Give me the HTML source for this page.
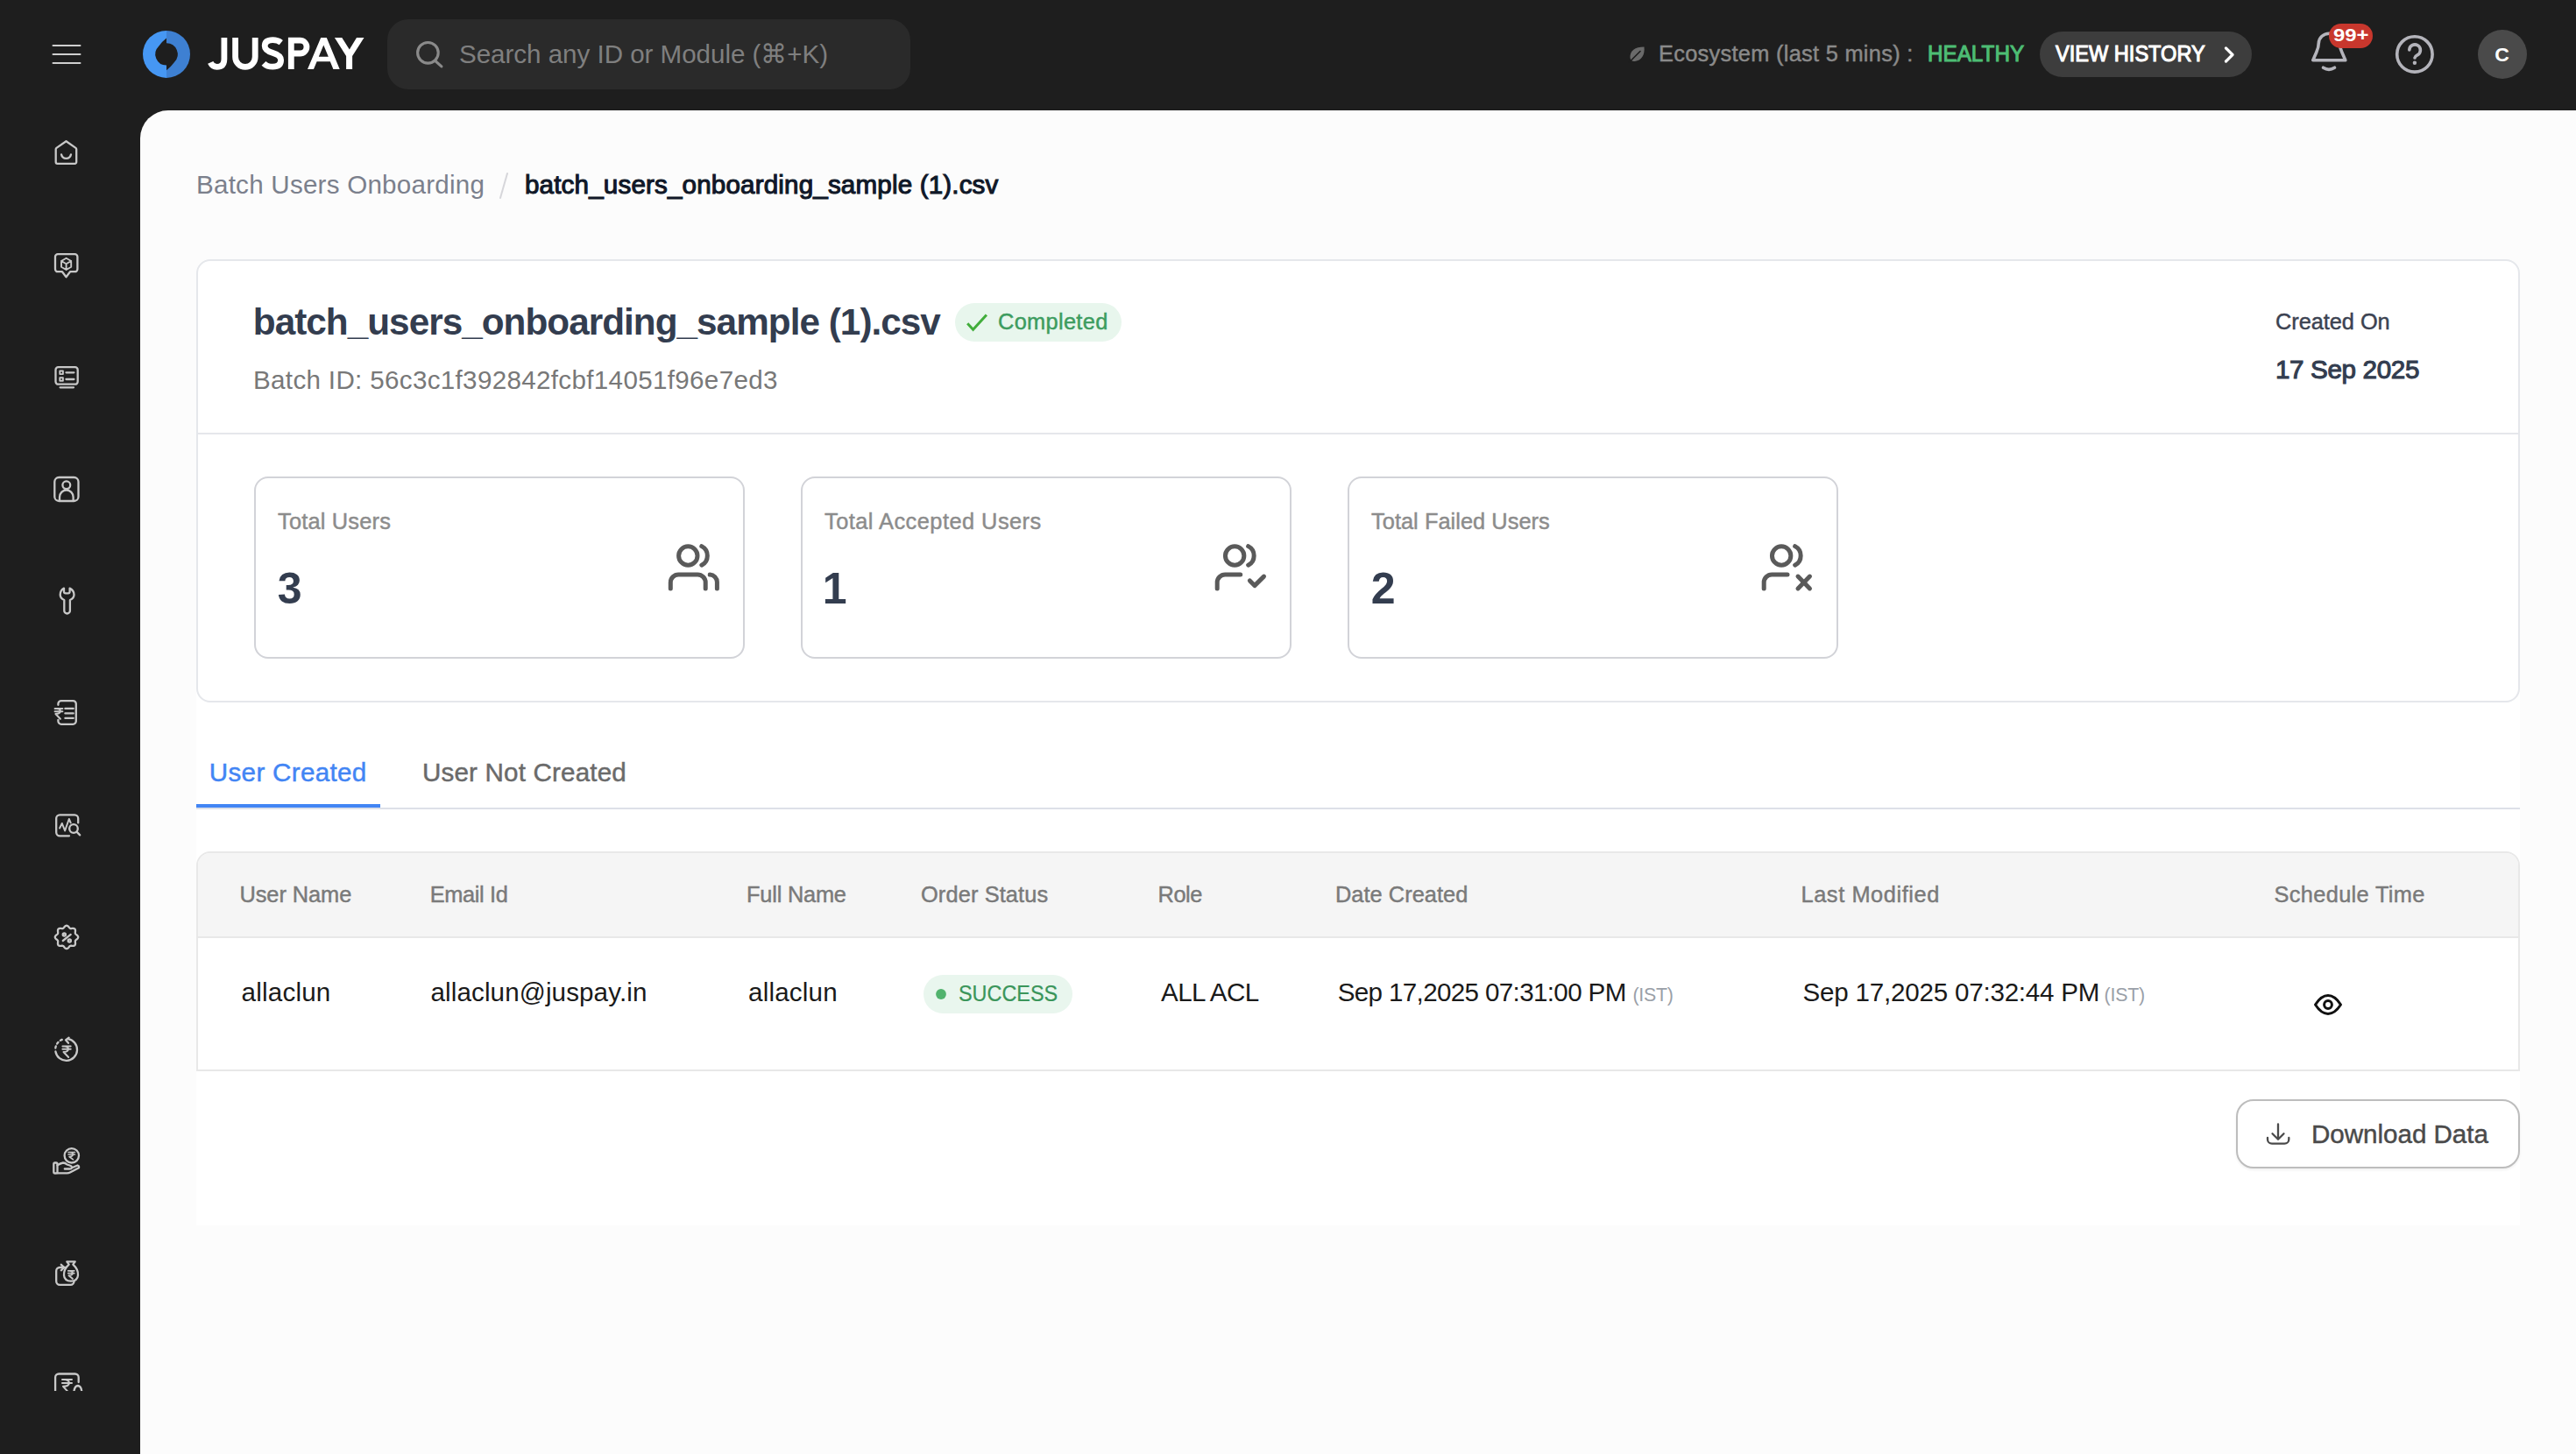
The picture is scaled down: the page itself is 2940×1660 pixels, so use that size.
<!DOCTYPE html>
<html><head><meta charset="utf-8"><style>
html,body{margin:0;padding:0;width:2940px;height:1660px;overflow:hidden;background:#1e1e1e;position:relative}
.t{position:absolute;font-family:"Liberation Sans",sans-serif;line-height:normal;white-space:nowrap}
.ov{position:absolute;left:0;top:0}
</style></head><body>
<div style="position:absolute;left:160px;top:126px;width:2780px;height:1534px;box-sizing:border-box;background:#fcfcfc;border-top-left-radius:32px"></div>
<div style="position:absolute;left:442px;top:22px;width:597px;height:80px;box-sizing:border-box;background:#2a2a2a;border-radius:24px"></div>
<div style="position:absolute;left:2328px;top:36px;width:242px;height:52px;box-sizing:border-box;background:#3d3d3d;border-radius:26px"></div>
<div style="position:absolute;left:2828px;top:34px;width:56px;height:56px;box-sizing:border-box;background:#4a4a4a;border-radius:50%"></div>
<div style="position:absolute;left:224px;top:790px;width:2652px;height:609px;box-sizing:border-box;background:#ffffff"></div>
<div style="position:absolute;left:224px;top:296px;width:2652px;height:506px;box-sizing:border-box;background:#fff;border:2px solid #e5e7eb;border-radius:16px"></div>
<div style="position:absolute;left:226px;top:494px;width:2648px;height:2px;box-sizing:border-box;background:#e5e7eb"></div>
<div style="position:absolute;left:1090px;top:346px;width:190px;height:44px;box-sizing:border-box;background:#e8f6ed;border-radius:22px"></div>
<div style="position:absolute;left:290px;top:544px;width:560px;height:208px;box-sizing:border-box;border:2px solid #d2d3d8;border-radius:16px;background:#fff"></div>
<div style="position:absolute;left:914px;top:544px;width:560px;height:208px;box-sizing:border-box;border:2px solid #d2d3d8;border-radius:16px;background:#fff"></div>
<div style="position:absolute;left:1538px;top:544px;width:560px;height:208px;box-sizing:border-box;border:2px solid #d2d3d8;border-radius:16px;background:#fff"></div>
<div style="position:absolute;left:224px;top:922px;width:2652px;height:2px;box-sizing:border-box;background:#dde0e8"></div>
<div style="position:absolute;left:224px;top:918px;width:210px;height:4px;box-sizing:border-box;background:#4285f4"></div>
<div style="position:absolute;left:224px;top:972px;width:2652px;height:251px;box-sizing:border-box;border:2px solid #e8e8e8;border-top-left-radius:16px;border-top-right-radius:16px;background:#fff"></div>
<div style="position:absolute;left:226px;top:974px;width:2648px;height:95px;box-sizing:border-box;background:#f5f5f5;border-top-left-radius:14px;border-top-right-radius:14px"></div>
<div style="position:absolute;left:226px;top:1069px;width:2648px;height:2px;box-sizing:border-box;background:#e8e8e8"></div>
<div style="position:absolute;left:1054px;top:1113px;width:170px;height:44px;box-sizing:border-box;background:#e9f6ee;border-radius:22px"></div>
<div style="position:absolute;left:2552px;top:1255px;width:324px;height:79px;box-sizing:border-box;border:2px solid #bdbdbd;border-radius:20px;background:#fff;box-shadow:0 2px 3px rgba(0,0,0,0.06)"></div>
<svg class="ov" width="2940" height="1660" viewBox="0 0 2940 1660" fill="none" stroke-linecap="round" stroke-linejoin="round">
<defs><clipPath id="sbclip"><rect x="0" y="1500" width="160" height="88"/></clipPath></defs>
<!-- hamburger -->
<g stroke="#cfcfcf" stroke-width="2">
<line x1="60.5" y1="52" x2="91.5" y2="52"/><line x1="60.5" y1="62" x2="91.5" y2="62"/><line x1="60.5" y1="72" x2="91.5" y2="72"/>
</g>
<!-- logo -->
<path d="M190 34.9 A27 27 0 0 0 190 88.9 Z" fill="#4697f3"/>
<path d="M190 34.9 A27 27 0 0 1 190 88.9 Z" fill="#3e80d2"/>
<path d="M190 43.6 Q185 47.5 181 52.9 A12.7 12.7 0 0 0 190 74.6 L190 80.2 Q195 76.3 199 70.9 A12.7 12.7 0 0 0 190 49.2 Z" fill="#1e1e1e"/>
<!-- logo text -->
<g stroke="#ffffff" stroke-width="6.8" stroke-linecap="butt" stroke-linejoin="miter">
<path d="M255.9 43 V67.5 Q255.9 76.4 247.5 76.4 Q242.5 76.4 240.2 71.4"/>
<path d="M268.6 43 V64.9 A11.3 11.5 0 0 0 291.2 64.9 V43"/>
<path d="M320.8 48.6 Q317 45.6 311.3 45.6 Q302.2 45.6 302.2 52.5 Q302.2 57.5 311 60.3 Q320.6 63.2 320.6 68.6 Q320.6 76.2 311.3 76.2 Q304.8 76.2 301 72.3"/>
<path d="M332.3 78.9 V46.1 H342.5 A7.45 7.45 0 0 1 342.5 61 H332.3"/>
</g>
<path fill="#ffffff" fill-rule="evenodd" d="M366.2 43 H372.8 L387.7 78.9 H380.4 L376.8 70.3 H361.6 L358 78.9 H351 Z M369.3 51.5 L374.8 64.7 H363.8 Z"/>
<path fill="#ffffff" d="M381.9 43 H390.3 L398.8 56.5 L407 43 H415.5 L402.1 63.9 V78.9 H395.1 V63.9 Z"/>
<!-- search icon -->
<g stroke="#8a8a8a" stroke-width="3.1"><circle cx="488.4" cy="60.3" r="11.8"/><line x1="497.3" y1="70" x2="503.9" y2="75.9"/></g>
<!-- leaf -->
<path d="M1876.5 53.5 C1866 53.5 1860 58 1860.5 66 C1861 69 1863 70.5 1866 70 C1874 69 1877.5 62 1876.5 53.5 Z" fill="#6a6a6a"/>
<path d="M1859.5 71 L1872 58.5" stroke="#1e1e1e" stroke-width="1.6"/>
<!-- chevron -->
<polyline points="2540.5,55 2548,62.5 2540.5,70" stroke="#ffffff" stroke-width="3.2"/>
<!-- bell -->
<g stroke="#b4b4bb" stroke-width="3.6">
<path d="M2639.8 68.8 L2643.8 59.5 Q2646.3 54 2646.3 49 V49.5 A11.9 11.2 0 0 1 2670.3 49.5 V49 Q2670.3 54 2672.8 59.5 L2676.8 68.8 Z"/>
<path d="M2651.5 77.2 Q2658 81.5 2664.5 77.2"/>
</g>
<!-- help -->
<g stroke="#b4b4bb" stroke-width="3.6">
<circle cx="2755.9" cy="61.9" r="20.2"/>
<path d="M2749.8 57 A6.3 6.3 0 1 1 2759.3 62.6 Q2756.3 64.2 2756 66"/>
</g>
<circle cx="2755.9" cy="71.7" r="2.2" fill="#b4b4bb"/>
<!-- badge -->
<rect x="2658" y="27" width="50" height="28" rx="14" fill="#c8372d"/>
<!-- breadcrumb slash -->
<line x1="579" y1="198" x2="571" y2="226" stroke="#d6d6da" stroke-width="2"/>
<!-- completed check -->
<polyline points="1104.2,369.3 1110.6,376.2 1125.9,359.4" stroke="#42ad3c" stroke-width="3" stroke-linecap="butt" stroke-linejoin="miter"/>
<!-- stat icons -->
<g stroke="#5a5a5a" stroke-width="5">
<circle cx="785.3" cy="634.5" r="10.7"/>
<path d="M800.8 623.6 A12.2 12.2 0 0 1 800.8 645.2"/>
<path d="M765.3 671.9 V665 A9 9 0 0 1 774.3 656 H796.2 A9 9 0 0 1 805.2 665 V671.9"/>
<path d="M810.2 656 A8.6 8.6 0 0 1 818.4 664.6 V671.9"/>
</g>
<g stroke="#5a5a5a" stroke-width="5">
<circle cx="1409.15" cy="634.5" r="10.7"/>
<path d="M1424.65 623.6 A12.2 12.2 0 0 1 1424.65 645.2"/>
<path d="M1389.2 671.9 V665 A9 9 0 0 1 1398.2 656 H1415.7"/>
<polyline points="1426.4,662.9 1431.9,668.6 1442.5,658.1"/>
</g>
<g stroke="#5a5a5a" stroke-width="5">
<circle cx="2033.15" cy="634.5" r="10.7"/>
<path d="M2048.65 623.6 A12.2 12.2 0 0 1 2048.65 645.2"/>
<path d="M2013.2 671.9 V665 A9 9 0 0 1 2022.2 656 H2040"/>
<line x1="2052" y1="658.1" x2="2065.5" y2="671.9"/><line x1="2065.5" y1="658.1" x2="2052" y2="671.9"/>
</g>
<!-- success dot -->
<circle cx="1074" cy="1135" r="5.9" fill="#52b36e"/>
<!-- eye -->
<g stroke="#111" stroke-width="3">
<path d="M2642.5 1147 C2647 1140 2651.5 1136.6 2657 1136.6 C2662.5 1136.6 2667 1140 2671.5 1147 C2667 1154 2662.5 1157.4 2657 1157.4 C2651.5 1157.4 2647 1154 2642.5 1147 Z"/>
<circle cx="2657" cy="1147" r="4.4"/>
</g>
<!-- download icon -->
<g stroke="#4a4a4a" stroke-width="2.3">
<path d="M2600 1283.5 V1300.5 M2593.5 1294.3 L2600 1300.8 L2606.5 1294.3"/>
<path d="M2588 1299 V1300.7 a5 5 0 0 0 5 5 H2607.3 a5 5 0 0 0 5 -5 V1299"/>
</g>
<!-- sidebar icons -->
<g stroke="#c8c8c8" stroke-width="2.3">
<!-- home -->
<path d="M63.7 185 V170.5 a2 2 0 0 1 0.8 -1.6 L75.5 161.2 L86.4 168.9 a2 2 0 0 1 0.8 1.6 V185 a1.8 1.8 0 0 1 -1.8 1.8 H65.5 a1.8 1.8 0 0 1 -1.8 -1.8 Z"/>
<path d="M70 176.3 a5.6 5.6 0 0 0 11 0"/>
<!-- cube bubble -->
<path d="M66 290.1 H85.4 a3 3 0 0 1 3 3 V307.2 a3 3 0 0 1 -3 3 H80 L75.5 316.2 L71 310.2 H66 a3 3 0 0 1 -3 -3 V293.1 a3 3 0 0 1 3 -3 Z"/>
<path d="M75.6 294.8 L81.2 298 V304.8 L75.6 308 L70 304.8 V298 Z M70 298 L75.6 301.2 L81.2 298 M75.6 301.2 V308" stroke-width="1.9"/>
<!-- monitor list -->
<rect x="63.5" y="419.2" width="25.2" height="19.5" rx="3"/>
<line x1="68.6" y1="442.3" x2="84" y2="442.3"/>
<rect x="68.3" y="423.5" width="3.6" height="3.6" stroke-width="1.9"/>
<rect x="68.3" y="431.2" width="3.6" height="3.6" stroke-width="1.9"/>
<line x1="75.5" y1="425.3" x2="84.4" y2="425.3"/><line x1="75.5" y1="433" x2="84.4" y2="433"/>
<!-- person frame -->
<rect x="62.3" y="545" width="27.2" height="27" rx="5"/>
<circle cx="75.8" cy="553.8" r="4.4"/>
<path d="M68 571.5 V567.5 a7.8 8 0 0 1 15.6 0 V571.5"/>
<!-- wrench -->
<path d="M73 671.6 L73 675.5 Q73 677.3 75 677.3 H77.7 Q79.6 677.3 79.6 675.5 V671.6 Q84.5 674 84.5 679 Q84.5 683 79.9 685 V697.2 a3.3 3.3 0 0 1 -6.6 0 V685 Q68.7 683 68.7 679 Q68.7 674 73 671.6 Z"/>
<!-- rupee doc -->
<path d="M66.4 804.8 V803.6 a3.5 3.5 0 0 1 3.5 -3.5 H83.3 a3.5 3.5 0 0 1 3.5 3.5 V823.3 a3.5 3.5 0 0 1 -3.5 3.5 H69.9 a3.5 3.5 0 0 1 -3.5 -3.5 V821.9"/>
<path d="M62.6 808.9 H71.4 M62.6 812.2 H71.4 M64.5 808.9 Q69 809 69 812.2 Q68.6 815 63.4 815 L68.9 820.8" stroke-width="2"/>
<path d="M74.4 808.9 H83.7 M74.4 814.4 H83.7 M74.4 819.9 H83.7"/>
<!-- analytics -->
<path d="M89.2 939.4 V934.3 a4 4 0 0 0 -4 -4 H68.2 a4 4 0 0 0 -4 4 V950.3 a4 4 0 0 0 4 4 H79"/>
<path d="M68.1 945.5 L70.8 940 L74.1 948.5 L78.8 935 L80.7 939.4" stroke-width="2"/>
<circle cx="84" cy="946" r="4.8"/>
<line x1="87.5" y1="949.6" x2="91.2" y2="953.4"/>
<!-- percent badge -->
<path d="M89.20 1069.90 L89.13 1070.42 L88.93 1070.92 L88.62 1071.39 L88.22 1071.84 L87.77 1072.24 L87.31 1072.61 L86.87 1072.97 L86.49 1073.31 L86.19 1073.66 L85.98 1074.03 L85.86 1074.45 L85.83 1074.91 L85.85 1075.42 L85.92 1075.98 L85.98 1076.57 L86.01 1077.17 L85.98 1077.77 L85.86 1078.32 L85.65 1078.82 L85.33 1079.23 L84.92 1079.55 L84.42 1079.76 L83.87 1079.88 L83.27 1079.91 L82.67 1079.88 L82.08 1079.82 L81.52 1079.75 L81.01 1079.73 L80.55 1079.76 L80.13 1079.88 L79.76 1080.09 L79.41 1080.39 L79.07 1080.77 L78.71 1081.21 L78.34 1081.67 L77.94 1082.12 L77.49 1082.52 L77.02 1082.83 L76.52 1083.03 L76.00 1083.10 L75.48 1083.03 L74.98 1082.83 L74.51 1082.52 L74.06 1082.12 L73.66 1081.67 L73.29 1081.21 L72.93 1080.77 L72.59 1080.39 L72.24 1080.09 L71.87 1079.88 L71.45 1079.76 L70.99 1079.73 L70.48 1079.75 L69.92 1079.82 L69.33 1079.88 L68.73 1079.91 L68.13 1079.88 L67.58 1079.76 L67.08 1079.55 L66.67 1079.23 L66.35 1078.82 L66.14 1078.32 L66.02 1077.77 L65.99 1077.17 L66.02 1076.57 L66.08 1075.98 L66.15 1075.42 L66.17 1074.91 L66.14 1074.45 L66.02 1074.03 L65.81 1073.66 L65.51 1073.31 L65.13 1072.97 L64.69 1072.61 L64.23 1072.24 L63.78 1071.84 L63.38 1071.39 L63.07 1070.92 L62.87 1070.42 L62.80 1069.90 L62.87 1069.38 L63.07 1068.88 L63.38 1068.41 L63.78 1067.96 L64.23 1067.56 L64.69 1067.19 L65.13 1066.83 L65.51 1066.49 L65.81 1066.14 L66.02 1065.77 L66.14 1065.35 L66.17 1064.89 L66.15 1064.38 L66.08 1063.82 L66.02 1063.23 L65.99 1062.63 L66.02 1062.03 L66.14 1061.48 L66.35 1060.98 L66.67 1060.57 L67.08 1060.25 L67.58 1060.04 L68.13 1059.92 L68.73 1059.89 L69.33 1059.92 L69.92 1059.98 L70.48 1060.05 L70.99 1060.07 L71.45 1060.04 L71.87 1059.92 L72.24 1059.71 L72.59 1059.41 L72.93 1059.03 L73.29 1058.59 L73.66 1058.13 L74.06 1057.68 L74.51 1057.28 L74.98 1056.97 L75.48 1056.77 L76.00 1056.70 L76.52 1056.77 L77.02 1056.97 L77.49 1057.28 L77.94 1057.68 L78.34 1058.13 L78.71 1058.59 L79.07 1059.03 L79.41 1059.41 L79.76 1059.71 L80.13 1059.92 L80.55 1060.04 L81.01 1060.07 L81.52 1060.05 L82.08 1059.98 L82.67 1059.92 L83.27 1059.89 L83.87 1059.92 L84.42 1060.04 L84.92 1060.25 L85.33 1060.57 L85.65 1060.98 L85.86 1061.48 L85.98 1062.03 L86.01 1062.63 L85.98 1063.23 L85.92 1063.82 L85.85 1064.38 L85.83 1064.89 L85.86 1065.35 L85.98 1065.77 L86.19 1066.14 L86.49 1066.49 L86.87 1066.83 L87.31 1067.19 L87.77 1067.56 L88.22 1067.96 L88.62 1068.41 L88.93 1068.88 L89.13 1069.38 L89.20 1069.90 Z"/>
<circle cx="73.3" cy="1067.1" r="1.6"/><circle cx="79.3" cy="1074" r="1.6"/>
<line x1="71.8" y1="1074" x2="80.7" y2="1066.9"/>
<!-- rupee refresh -->
<path d="M77.5 1186.2 A12.4 12.4 0 1 1 63.4 1200.5"/>
<path d="M63.3 1196.5 A12.4 12.4 0 0 1 72.5 1186.3" stroke-dasharray="2.2 3"/>
<polyline points="78.6,1184.6 75,1187.3 78,1190.8"/>
<path d="M71.4 1194.6 H80.7 M71.4 1197.8 H80.7 M73.5 1194.6 Q78 1194.8 78 1197.8 Q77.5 1201 72.5 1201 L78.2 1207" stroke-width="2"/>
<!-- hand coin -->
<circle cx="81.8" cy="1319.3" r="8.2"/>
<path d="M78 1315.5 H85.5 M78 1318 H85.5 M79.5 1315.5 Q83.5 1315.5 83.5 1318 Q83 1320.5 79 1320.5 L83.5 1323.8" stroke-width="1.6"/>
<rect x="61.3" y="1327.5" width="4.2" height="12" rx="1.5"/>
<path d="M65.5 1330.3 Q69 1328 72 1327.5 Q74.5 1327.5 76.5 1329.5 L79.5 1330.5 Q82.5 1331.5 82 1333.5 Q81.5 1334.5 79.5 1334.5 H73.8 M82 1333.3 L88.5 1330.5 Q90.5 1331 90 1333.2 L80 1338.5 Q78.5 1339.3 76.5 1339.3 H65.5"/>
<!-- bag -->
<path d="M74 1447 a3 3 0 0 0 -0.5 0 H68.2 a4 4 0 0 0 -4 4 V1462.8 a4 4 0 0 0 4 4 H80.5 a4 4 0 0 0 4 -4 V1463.5"/>
<polyline points="69.8,1443.8 73.3,1447 69.8,1450.3"/>
<path d="M76.3 1440.4 H85.7 L83.3 1443.6 Q89.5 1449 89 1456 Q88.5 1462.5 81 1462.6 Q73.5 1462.5 73 1456 Q72.5 1449 78.7 1443.6 Z"/>
<path d="M77.8 1450.8 H84.8 M77.8 1453.6 H84.8 M79.3 1450.8 Q83 1451 83 1453.6 Q82.5 1456.2 78.5 1456.2 L83 1460" stroke-width="1.8"/>
<!-- last (clipped) -->
<g clip-path="url(#sbclip)">
<path d="M63.1 1592 V1572.5 a4 4 0 0 1 4 -4 H85.7 a4 4 0 0 1 4 4 V1578"/>
<path d="M71 1575 H82 M71 1579 H82 M73 1575 Q79 1575.3 79 1579 Q78.5 1582.8 72 1582.8 L78.5 1590" stroke-width="2"/>
<path d="M84.2 1590 Q85 1582 89 1582 Q93 1582.5 93.4 1590"/>
</g>
</g>
</svg>
<span class="t" id="search" style="left:524.00px;top:44.77px;font-size:29.593px;font-weight:400;letter-spacing:-0.036px;color:#7f7f7f;">Search any ID or Module (⌘+K)</span>
<span class="t" id="eco" style="left:1893.00px;top:46.67px;font-size:25.363px;font-weight:400;letter-spacing:0.292px;color:#8a8a8a;-webkit-text-stroke:0.45px currentColor;">Ecosystem (last 5 mins) :</span>
<span class="t" id="healthy" style="left:2199.64px;top:46.67px;font-size:25.363px;font-weight:400;letter-spacing:0.000px;color:#4dbd74;-webkit-text-stroke:1.1px currentColor;transform:scaleX(0.9565);transform-origin:0 0;">HEALTHY</span>
<span class="t" id="vh" style="left:2345.93px;top:46.67px;font-size:25.363px;font-weight:400;letter-spacing:0.000px;color:#ffffff;-webkit-text-stroke:1.1px currentColor;transform:scaleX(0.9297);transform-origin:0 0;">VIEW HISTORY</span>
<span class="t" id="avc" style="left:2847.30px;top:49.07px;font-size:22.965px;font-weight:700;letter-spacing:0.000px;color:#ffffff;">C</span>
<span class="t" id="badge" style="left:2663.00px;top:28.31px;font-size:21.076px;font-weight:700;letter-spacing:0.000px;color:#ffffff;transform:scaleX(1.1343);transform-origin:0 0;">99+</span>
<span class="t" id="bc1" style="left:224.00px;top:193.77px;font-size:29.593px;font-weight:400;letter-spacing:0.238px;color:#7b808c;">Batch Users Onboarding</span>
<span class="t" id="bc2" style="left:599.00px;top:194.07px;font-size:29.593px;font-weight:400;letter-spacing:0.167px;color:#101828;-webkit-text-stroke:1.1px currentColor;">batch_users_onboarding_sample (1).csv</span>
<span class="t" id="title" style="left:288.80px;top:344.09px;font-size:42.297px;font-weight:700;letter-spacing:-0.972px;color:#333d4f;">batch_users_onboarding_sample (1).csv</span>
<span class="t" id="completed" style="left:1139.00px;top:353.47px;font-size:25.363px;font-weight:400;letter-spacing:0.325px;color:#3d9c5f;-webkit-text-stroke:0.45px currentColor;">Completed</span>
<span class="t" id="batchid" style="left:289.00px;top:416.77px;font-size:29.593px;font-weight:400;letter-spacing:0.333px;color:#787878;">Batch ID: 56c3c1f392842fcbf14051f96e7ed3</span>
<span class="t" id="createdon" style="left:2597.00px;top:353.07px;font-size:25.363px;font-weight:400;letter-spacing:-0.044px;color:#3b4251;-webkit-text-stroke:0.45px currentColor;">Created On</span>
<span class="t" id="date" style="left:2597.00px;top:404.77px;font-size:29.593px;font-weight:400;letter-spacing:-0.340px;color:#333d4f;-webkit-text-stroke:1.1px currentColor;">17 Sep 2025</span>
<span class="t" id="tu" style="left:317.00px;top:580.57px;font-size:25.363px;font-weight:400;letter-spacing:0.200px;color:#8c8c8c;-webkit-text-stroke:0.45px currentColor;">Total Users</span>
<span class="t" id="tau" style="left:941.00px;top:580.57px;font-size:25.363px;font-weight:400;letter-spacing:0.474px;color:#8c8c8c;-webkit-text-stroke:0.45px currentColor;">Total Accepted Users</span>
<span class="t" id="tfu" style="left:1565.00px;top:580.57px;font-size:25.363px;font-weight:400;letter-spacing:0.047px;color:#8c8c8c;-webkit-text-stroke:0.45px currentColor;">Total Failed Users</span>
<span class="t" id="n3" style="left:316.80px;top:642.50px;font-size:50.000px;font-weight:700;letter-spacing:0.000px;color:#333d4f;">3</span>
<span class="t" id="n1" style="left:938.80px;top:642.50px;font-size:50.000px;font-weight:700;letter-spacing:0.000px;color:#333d4f;">1</span>
<span class="t" id="n2" style="left:1564.80px;top:642.50px;font-size:50.000px;font-weight:700;letter-spacing:0.000px;color:#333d4f;">2</span>
<span class="t" id="tab1" style="left:238.80px;top:864.77px;font-size:29.593px;font-weight:400;letter-spacing:0.327px;color:#4285f4;-webkit-text-stroke:0.45px currentColor;">User Created</span>
<span class="t" id="tab2" style="left:482.00px;top:864.77px;font-size:29.593px;font-weight:400;letter-spacing:0.173px;color:#6a6a6a;-webkit-text-stroke:0.45px currentColor;">User Not Created</span>
<span class="t" id="h1" style="left:273.50px;top:1007.07px;font-size:25.363px;font-weight:400;letter-spacing:-0.062px;color:#7a7a7a;-webkit-text-stroke:0.45px currentColor;">User Name</span>
<span class="t" id="h2" style="left:490.70px;top:1007.07px;font-size:25.363px;font-weight:400;letter-spacing:-0.343px;color:#7a7a7a;-webkit-text-stroke:0.45px currentColor;">Email Id</span>
<span class="t" id="h3" style="left:852.00px;top:1007.07px;font-size:25.363px;font-weight:400;letter-spacing:-0.200px;color:#7a7a7a;-webkit-text-stroke:0.45px currentColor;">Full Name</span>
<span class="t" id="h4" style="left:1051.00px;top:1007.07px;font-size:25.363px;font-weight:400;letter-spacing:0.127px;color:#7a7a7a;-webkit-text-stroke:0.45px currentColor;">Order Status</span>
<span class="t" id="h5" style="left:1321.50px;top:1007.07px;font-size:25.363px;font-weight:400;letter-spacing:-0.433px;color:#7a7a7a;-webkit-text-stroke:0.45px currentColor;">Role</span>
<span class="t" id="h6" style="left:1524.00px;top:1007.07px;font-size:25.363px;font-weight:400;letter-spacing:0.045px;color:#7a7a7a;-webkit-text-stroke:0.45px currentColor;">Date Created</span>
<span class="t" id="h7" style="left:2055.50px;top:1007.07px;font-size:25.363px;font-weight:400;letter-spacing:0.583px;color:#7a7a7a;-webkit-text-stroke:0.45px currentColor;">Last Modified</span>
<span class="t" id="h8" style="left:2595.60px;top:1007.07px;font-size:25.363px;font-weight:400;letter-spacing:0.333px;color:#7a7a7a;-webkit-text-stroke:0.45px currentColor;">Schedule Time</span>
<span class="t" id="r1" style="left:275.60px;top:1115.97px;font-size:29.593px;font-weight:400;letter-spacing:0.200px;color:#1a1a1a;">allaclun</span>
<span class="t" id="r2" style="left:491.50px;top:1115.97px;font-size:29.593px;font-weight:400;letter-spacing:0.118px;color:#1a1a1a;">allaclun@juspay.in</span>
<span class="t" id="r3" style="left:854.00px;top:1115.97px;font-size:29.593px;font-weight:400;letter-spacing:0.200px;color:#1a1a1a;">allaclun</span>
<span class="t" id="r5" style="left:1325.00px;top:1115.97px;font-size:29.593px;font-weight:400;letter-spacing:-0.583px;color:#1a1a1a;">ALL ACL</span>
<span class="t" id="r6" style="left:1526.70px;top:1115.97px;font-size:29.593px;font-weight:400;letter-spacing:-0.641px;color:#1a1a1a;">Sep 17,2025 07:31:00 PM</span>
<span class="t" id="r6b" style="left:1863.40px;top:1123.54px;font-size:21.366px;font-weight:400;letter-spacing:-0.250px;color:#9aa0a8;">(IST)</span>
<span class="t" id="r7" style="left:2057.50px;top:1115.97px;font-size:29.593px;font-weight:400;letter-spacing:-0.214px;color:#1a1a1a;">Sep 17,2025 07:32:44 PM</span>
<span class="t" id="r7b" style="left:2401.60px;top:1123.54px;font-size:21.366px;font-weight:400;letter-spacing:-0.250px;color:#9aa0a8;">(IST)</span>
<span class="t" id="success" style="left:1094.16px;top:1120.20px;font-size:25.000px;font-weight:400;letter-spacing:0.000px;color:#3a955a;-webkit-text-stroke:0.2px currentColor;transform:scaleX(0.9361);transform-origin:0 0;">SUCCESS</span>
<span class="t" id="dl" style="left:2638.00px;top:1277.57px;font-size:29.593px;font-weight:400;letter-spacing:-0.025px;color:#4a4a4a;-webkit-text-stroke:0.45px currentColor;">Download Data</span>
</body></html>
